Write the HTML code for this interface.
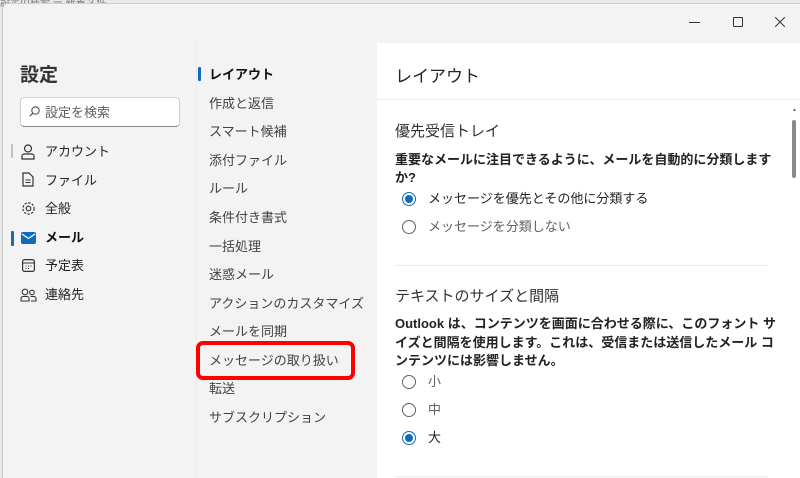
<!DOCTYPE html>
<html><head><meta charset="utf-8"><style>
*{margin:0;padding:0;box-sizing:border-box}
body{width:800px;height:478px;overflow:hidden;background:#e8e8e8;font-family:"Liberation Sans","Noto Sans CJK JP",sans-serif;color:#242424;position:relative}
.win{position:absolute;left:2px;top:3px;right:0;bottom:0;background:#f3f3f3;border-left:1px solid #c8c8c8;border-top:1px solid #d0d0d0;border-top-left-radius:6px}
.abs{position:absolute;white-space:nowrap}
.t{font-size:13px;line-height:16px}
.mid{color:#424242}
.right{position:absolute;left:377px;top:43px;right:0;bottom:0;background:#fff}
.radio{position:absolute;width:14px;height:14px;border:1px solid #616161;border-radius:50%}
.radio.on{border-color:#0f6cbd}
.radio.on:after{content:"";position:absolute;left:2px;top:2px;width:8px;height:8px;border-radius:50%;background:#0f6cbd}
</style></head><body>
<div class="abs" style="left:0;top:-6px;font-size:10px;color:#777">設定の検索 ー 新着 3 件</div>
<div class="win"></div>
<div class="abs" style="left:689px;top:22px;width:11px;height:1px;background:#333"></div>
<div class="abs" style="left:733px;top:17px;width:10px;height:10px;border:1px solid #333;border-radius:1px"></div>
<svg class="abs" style="left:775px;top:17px" width="10" height="10"><path d="M0 0L10 10M10 0L0 10" stroke="#333" stroke-width="1"/></svg>
<div class="abs" style="left:196px;top:43px;width:1px;height:435px;background:#ebebeb"></div>
<div class="abs" style="left:20px;top:60px;font-size:19px;font-weight:bold;color:#333">設定</div>
<div class="abs" style="left:20px;top:97px;width:160px;height:30px;background:#fff;border:1px solid #d1d1d1;border-bottom-color:#8a8a8a;border-radius:4px"></div>
<svg class="abs" style="left:29px;top:106px" width="11" height="11"><circle cx="6.5" cy="4.5" r="3.7" fill="none" stroke="#555" stroke-width="1.1"/><path d="M3.8 7.2L0.8 10.2" stroke="#555" stroke-width="1.2"/></svg>
<div class="abs t" style="left:45px;top:105px;color:#616161">設定を検索</div>
<div class="abs" style="left:11px;top:144px;width:2px;height:14px;background:#c0c0c0;border-radius:1px"></div>
<div class="abs" style="left:11px;top:231px;width:3px;height:15px;background:#0f6cbd;border-radius:1px"></div>
<svg class="abs" style="left:21px;top:144px" width="14" height="16"><circle cx="7" cy="4.5" r="3.5" fill="none" stroke="#333" stroke-width="1.2"/><path d="M1 15v-3a2 2 0 0 1 2-2h8a2 2 0 0 1 2 2v3z" fill="none" stroke="#333" stroke-width="1.2"/></svg>
<div class="abs t" style="left:45px;top:144px">アカウント</div>
<svg class="abs" style="left:22px;top:172px" width="12" height="15"><path d="M1 1h6l4 4v9H1z" fill="none" stroke="#333" stroke-width="1.2"/><path d="M3.5 8h5M3.5 10.5h5" stroke="#333"/></svg>
<div class="abs t" style="left:45px;top:173px">ファイル</div>
<svg class="abs" style="left:21px;top:201px" width="15" height="15"><circle cx="7.5" cy="7.5" r="2.3" fill="none" stroke="#333" stroke-width="1.2"/><circle cx="7.5" cy="7.5" r="5.6" fill="none" stroke="#333" stroke-width="1.2" stroke-dasharray="2.3 1.4"/></svg>
<div class="abs t" style="left:45px;top:201px">全般</div>
<svg class="abs" style="left:21px;top:232px" width="15" height="12"><rect x="0" y="0" width="15" height="12" rx="2" fill="#0f6cbd"/><path d="M1 2l6.5 4.5L14 2" fill="none" stroke="#fff" stroke-width="1.2"/></svg>
<div class="abs t" style="left:45px;top:230px;font-weight:bold;color:#111">メール</div>
<svg class="abs" style="left:22px;top:259px" width="13" height="13"><rect x="0.6" y="0.6" width="11.8" height="11.8" rx="2" fill="none" stroke="#333" stroke-width="1.2"/><path d="M0.6 4h11.8" stroke="#333"/><path d="M3.5 7h1M6 7h1M8.5 7h1M3.5 9.5h1M6 9.5h1" stroke="#333"/></svg>
<div class="abs t" style="left:45px;top:258px">予定表</div>
<svg class="abs" style="left:20px;top:288px" width="17" height="14"><circle cx="5" cy="4" r="2.8" fill="none" stroke="#333" stroke-width="1.1"/><circle cx="12" cy="4.5" r="2.3" fill="none" stroke="#333" stroke-width="1.1"/><path d="M1 13v-2.5a2 2 0 0 1 2-2h4a2 2 0 0 1 2 2V13zM10.5 8.5H14a2 2 0 0 1 2 2V13h-5" fill="none" stroke="#333" stroke-width="1.1"/></svg>
<div class="abs t" style="left:45px;top:287px">連絡先</div>
<div class="abs" style="left:198px;top:67px;width:3px;height:14px;background:#0f6cbd;border-radius:1px"></div>
<div class="abs t" style="left:209px;top:67px;font-weight:bold;color:#111">レイアウト</div>
<div class="abs t mid" style="left:209px;top:96px">作成と返信</div>
<div class="abs t mid" style="left:209px;top:124px">スマート候補</div>
<div class="abs t mid" style="left:209px;top:153px">添付ファイル</div>
<div class="abs t mid" style="left:209px;top:181px">ルール</div>
<div class="abs t mid" style="left:209px;top:210px">条件付き書式</div>
<div class="abs t mid" style="left:209px;top:239px">一括処理</div>
<div class="abs t mid" style="left:209px;top:267px">迷惑メール</div>
<div class="abs t mid" style="left:209px;top:296px">アクションのカスタマイズ</div>
<div class="abs t mid" style="left:209px;top:324px">メールを同期</div>
<div class="abs t mid" style="left:209px;top:353px">メッセージの取り扱い</div>
<div class="abs t mid" style="left:209px;top:381px">転送</div>
<div class="abs t mid" style="left:209px;top:410px">サブスクリプション</div>
<div class="abs" style="left:196px;top:341px;width:159px;height:39px;border:4px solid #f00;border-radius:7px"></div>
<div class="right"></div>
<div class="abs" style="left:395px;top:62px;font-size:17px;color:#242424">レイアウト</div>
<div class="abs" style="left:377px;top:99px;width:423px;height:1px;background:#ececec"></div>
<div class="abs" style="left:792px;top:120px;width:4px;height:58px;background:#8a8a8a;border-radius:2px"></div>
<div class="abs" style="left:792px;top:107px;font-size:5px;color:#666">▲</div>
<div class="abs" style="left:395px;top:120px;font-size:15px;color:#333">優先受信トレイ</div>
<div class="abs t" style="left:395px;top:151px;font-weight:bold;line-height:18px;color:#222">重要なメールに注目できるように、メールを自動的に分類します</div>
<div class="abs t" style="left:395px;top:169px;font-weight:bold;line-height:18px;color:#222">か?</div>
<div class="radio on" style="left:402px;top:192px"></div>
<div class="abs t" style="left:428px;top:191px">メッセージを優先とその他に分類する</div>
<div class="radio" style="left:402px;top:220px"></div>
<div class="abs t" style="left:428px;top:219px;color:#616161">メッセージを分類しない</div>
<div class="abs" style="left:395px;top:265px;width:373px;height:1px;background:#e8e8e8"></div>
<div class="abs" style="left:395px;top:285px;font-size:15px;color:#333">テキストのサイズと間隔</div>
<div class="abs t" style="left:395px;top:315px;font-weight:bold;line-height:18.5px;color:#222">Outlook は、コンテンツを画面に合わせる際に、このフォント サ<br>イズと間隔を使用します。これは、受信または送信したメール コ<br>ンテンツには影響しません。</div>
<div class="radio" style="left:402px;top:375px"></div>
<div class="abs t" style="left:428px;top:374px;color:#616161">小</div>
<div class="radio" style="left:402px;top:403px"></div>
<div class="abs t" style="left:428px;top:402px;color:#616161">中</div>
<div class="radio on" style="left:402px;top:431px"></div>
<div class="abs t" style="left:428px;top:430px">大</div>
<div class="abs" style="left:395px;top:476px;width:373px;height:1px;background:#e8e8e8"></div>
</body></html>
